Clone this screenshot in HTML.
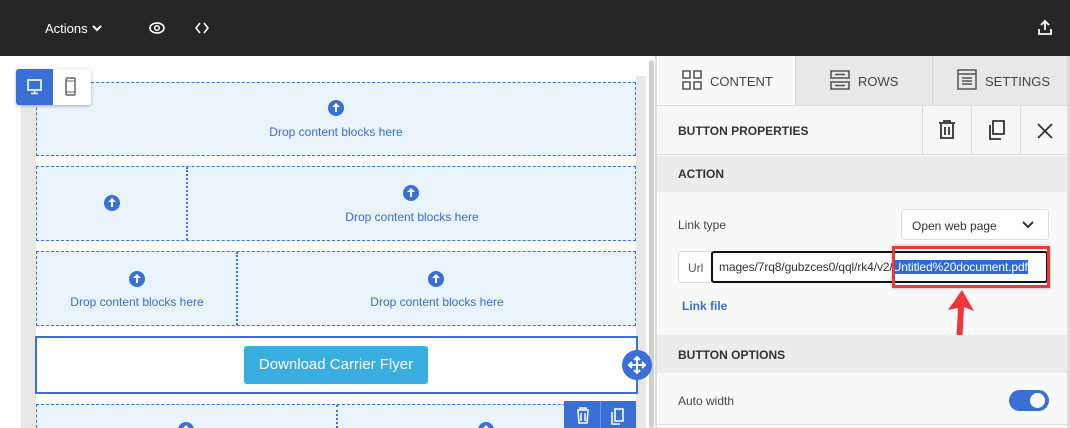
<!DOCTYPE html><html><head><style>
*{box-sizing:border-box;margin:0;padding:0}
html,body{width:1070px;height:428px;overflow:hidden}
body{position:relative;font-family:"Liberation Sans",sans-serif;background:#fff}
.a{position:absolute}
.drop{position:absolute;background:#e8f3fc;border:1px dashed #3a72d9}
.dt{position:absolute;width:100%;text-align:center;color:#3a6fd6;font-size:12px}
.up{position:absolute;width:16px;height:16px;border-radius:50%;background:#3a6fd6}
.up:after{content:"";position:absolute;left:7px;top:5px;width:2px;height:7px;background:#fff}
.up:before{content:"";position:absolute;left:4px;top:3px;border:4px solid transparent;border-bottom:4px solid #fff;border-top:0}
.hd{position:absolute;left:657px;width:413px;font-size:12px;font-weight:bold;color:#333;padding-left:21px}
</style></head><body>
<div class="a" style="left:0;top:0;width:1070px;height:56px;background:#262626"></div>
<div class="a" style="left:45px;top:21px;color:#fff;font-size:13px">Actions</div>
<svg class="a" style="left:92px;top:24px" width="10" height="8"><path d="M1 2l4 4 4-4" stroke="#fff" stroke-width="2" fill="none"/></svg>
<svg class="a" style="left:149px;top:21px" width="16" height="14"><ellipse cx="8" cy="7" rx="7" ry="5" stroke="#fff" stroke-width="1.6" fill="none"/><circle cx="8" cy="7" r="2.3" stroke="#fff" stroke-width="1.5" fill="none"/></svg>
<svg class="a" style="left:195px;top:22px" width="14" height="12"><path d="M5 1L1 6l4 5M9 1l4 5-4 5" stroke="#fff" stroke-width="1.5" fill="none"/></svg>
<svg class="a" style="left:1037px;top:19px" width="16" height="17"><path d="M8 11V2M4 6l4-4 4 4M2 10v5h12v-5" stroke="#fff" stroke-width="1.8" fill="none"/></svg>
<div class="a" style="left:21px;top:76px;width:15px;height:352px;background:#e8e8e8"></div>
<div class="a" style="left:636px;top:76px;width:10px;height:352px;background:#e8e8e8"></div>
<div class="a" style="left:649px;top:60px;width:5px;height:368px;background:#cfcfcf;border-radius:3px"></div>
<div class="a" style="left:655px;top:56px;width:2px;height:372px;background:#ddd"></div>
<div class="drop" style="left:36px;top:82px;width:600px;height:74px"><div class="up" style="left:291px;top:17px"></div><div class="dt" style="top:42px">Drop content blocks here</div></div>
<div class="drop" style="left:36px;top:166px;width:600px;height:75px"><div class="up" style="left:67px;top:28px"></div><div class="a" style="left:149px;top:0;height:100%;border-left:2px dotted #3a72d9"></div><div class="up" style="left:366px;top:18px"></div><div class="dt" style="top:43px;left:150px;width:450px">Drop content blocks here</div></div>
<div class="drop" style="left:36px;top:251px;width:600px;height:75px"><div class="up" style="left:92px;top:19px"></div><div class="dt" style="top:43px;width:200px">Drop content blocks here</div><div class="a" style="left:199px;top:0;height:100%;border-left:2px dotted #3a72d9"></div><div class="up" style="left:391px;top:19px"></div><div class="dt" style="top:43px;left:200px;width:400px">Drop content blocks here</div></div>
<div class="a" style="left:35px;top:336px;width:603px;height:58px;border:2px solid #3a6fd6;background:#fff"></div>
<div class="a" style="left:244px;top:346px;width:184px;height:38px;background:#3aaee0;border-radius:3px;color:#fff;font-size:15px;text-align:center;line-height:38px">Download Carrier Flyer</div>
<div class="a" style="left:622px;top:350px;width:30px;height:30px;border-radius:50%;background:#3a6fd6"></div>
<svg class="a" style="left:626px;top:354px" width="22" height="22"><path d="M11 3v16M3 11h16M8 6l3-3 3 3M8 16l3 3 3-3M6 8l-3 3 3 3M16 8l3 3-3 3" stroke="#fff" stroke-width="2" fill="none"/></svg>
<div class="drop" style="left:36px;top:404px;width:600px;height:24px;border-bottom:0"><div class="a" style="left:299px;top:0;height:100%;border-left:2px dotted #3a72d9"></div><div class="up" style="left:141px;top:17px"></div><div class="up" style="left:441px;top:17px"></div></div>
<div class="a" style="left:564px;top:401px;width:72px;height:27px;background:#3a6fd6"></div>
<div class="a" style="left:600px;top:401px;width:1px;height:27px;background:#6d95e2"></div>
<svg class="a" style="left:574px;top:406px" width="54" height="20"><path d="M3 4h12M6 4V2h6v2M4 5l1 12h8l1-12M7 7v8M11 7v8" stroke="#fff" stroke-width="1.5" fill="none"/><path d="M41 3h8v12h-8zM38 6v12h8" stroke="#fff" stroke-width="1.6" fill="none"/></svg>
<div class="a" style="left:16px;top:69px;width:75px;height:36px;background:#fff;border-radius:3px;box-shadow:0 1px 3px rgba(0,0,0,.3)"></div>
<div class="a" style="left:16px;top:69px;width:37px;height:36px;background:#3a6fd6;border-radius:3px 0 0 3px"></div>
<svg class="a" style="left:26px;top:78px" width="18" height="18"><rect x="2" y="2" width="13" height="10" stroke="#fff" stroke-width="1.6" fill="none"/><path d="M8.5 12v3M5 15.5h7" stroke="#fff" stroke-width="1.6"/></svg>
<svg class="a" style="left:64px;top:77px" width="14" height="20"><rect x="2" y="1" width="9" height="17" rx="1" stroke="#666" stroke-width="1.5" fill="none"/><path d="M2 4h9M2 15h9" stroke="#666"/></svg>
<div class="a" style="left:657px;top:56px;width:413px;height:372px;background:#f9f9f9;border-right:3px solid #ddd"></div>
<div class="a" style="left:795px;top:56px;width:272px;height:50px;background:#e8e8e8;border-left:1px solid #d6d6d6"></div>
<div class="a" style="left:932px;top:56px;width:1px;height:50px;background:#d6d6d6"></div>
<div class="a" style="left:657px;top:105px;width:410px;height:1px;background:#ddd"></div>
<svg class="a" style="left:682px;top:70px" width="20" height="20"><path d="M1 1h7v7H1zM12 1h7v7h-7zM1 12h7v7H1zM12 12h7v7h-7z" stroke="#555" stroke-width="1.6" fill="none"/></svg>
<div class="a" style="left:710px;top:74px;font-size:13px;color:#444">CONTENT</div>
<svg class="a" style="left:830px;top:70px" width="20" height="20"><path d="M1 1h18v7H1zM1 12h18v7H1zM5 4.5h10M5 15.5h10" stroke="#555" stroke-width="1.6" fill="none"/></svg>
<div class="a" style="left:858px;top:74px;font-size:13px;color:#444">ROWS</div>
<svg class="a" style="left:957px;top:69px" width="20" height="21"><path d="M1 1h18v19H1zM1 5h18M5 9h10M5 12h10M5 15h10" stroke="#555" stroke-width="1.5" fill="none"/></svg>
<div class="a" style="left:985px;top:74px;font-size:13px;color:#444">SETTINGS</div>
<div class="a" style="left:657px;top:106px;width:410px;height:49px;background:#f7f7f7;border-bottom:1px solid #ddd"></div>
<div class="hd" style="top:124px">BUTTON PROPERTIES</div>
<div class="a" style="left:922px;top:106px;width:1px;height:49px;background:#ddd"></div>
<div class="a" style="left:971px;top:106px;width:1px;height:49px;background:#ddd"></div>
<div class="a" style="left:1020px;top:106px;width:1px;height:49px;background:#ddd"></div>
<svg class="a" style="left:936px;top:119px" width="22" height="22"><path d="M3 4h16M8 4V2h6v2M5 5v14h12V5M9 8v8M13 8v8" stroke="#333" stroke-width="1.8" fill="none"/></svg>
<svg class="a" style="left:985px;top:119px" width="22" height="22"><path d="M8 2h11v13H8zM5 6v14h11" stroke="#333" stroke-width="1.8" fill="none"/></svg>
<svg class="a" style="left:1036px;top:122px" width="18" height="18"><path d="M2 2l14 14M16 2L2 16" stroke="#333" stroke-width="1.8"/></svg>
<div class="a" style="left:657px;top:156px;width:410px;height:36px;background:#ececec"></div>
<div class="hd" style="top:167px">ACTION</div>
<div class="a" style="left:678px;top:218px;font-size:12px;color:#444">Link type</div>
<div class="a" style="left:901px;top:209px;width:148px;height:31px;background:#fff;border:1px solid #ddd;border-radius:3px;font-size:12px;color:#333;padding:9px 10px">Open web page</div>
<svg class="a" style="left:1022px;top:220px" width="12" height="9"><path d="M1 2l5 5 5-5" stroke="#333" stroke-width="2" fill="none"/></svg>
<div class="a" style="left:678px;top:251px;width:34px;height:32px;background:#fff;border:1px solid #ddd;border-radius:3px 0 0 3px;font-size:12px;color:#555;padding:9px 0 0 9px">Url</div>
<div class="a" style="left:711px;top:251px;width:337px;height:32px;background:#fff;border:2px solid #111;border-radius:3px;overflow:hidden;white-space:nowrap;font-size:12px;color:#333;padding:7px 0 0 6px;letter-spacing:-.1px">mages/7rq8/gubzces0/qql/rk4/v2/<span style="background:#2f6bd8;color:#fff">Untitled%20document.pdf</span></div>
<div class="a" style="left:892px;top:246px;width:158px;height:42px;border:3px solid #e8393b;box-shadow:0 0 3px rgba(0,0,0,.3)"></div>
<svg class="a" style="left:940px;top:282px" width="40" height="68"><path d="M22 8L8 28l10-2-2 38 6-1 2-38 10 4z" fill="#f0353b"/></svg>
<div class="a" style="left:682px;top:299px;font-size:12px;font-weight:bold;color:#3a6fd6">Link file</div>
<div class="a" style="left:657px;top:335px;width:410px;height:38px;background:#ececec"></div>
<div class="hd" style="top:348px">BUTTON OPTIONS</div>
<div class="a" style="left:678px;top:394px;font-size:12px;color:#444">Auto width</div>
<div class="a" style="left:1009px;top:390px;width:40px;height:21px;border-radius:11px;background:#3a6fd6"></div>
<div class="a" style="left:1030px;top:393px;width:15px;height:15px;border-radius:50%;background:#fff"></div>
<div class="a" style="left:657px;top:424px;width:410px;height:1px;background:#ddd"></div>
</body></html>
